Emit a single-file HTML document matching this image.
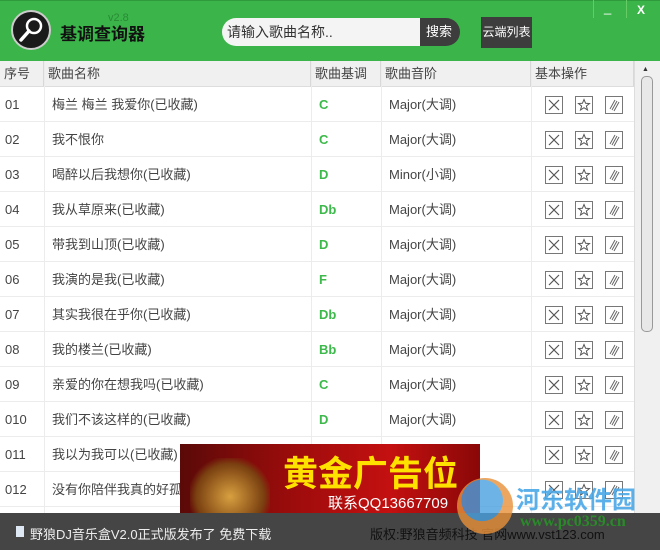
<!DOCTYPE html>
<html><head><meta charset="utf-8"><style>
*{margin:0;padding:0;box-sizing:border-box}
body{width:660px;height:550px;overflow:hidden;background:#fff;font-family:"Liberation Sans","Noto Sans CJK SC",sans-serif;position:relative;color:#333}
.hdr{position:absolute;left:0;top:0;width:660px;height:61px;background:#3bb54a;border-top:1px solid #2e9a3c}
.abs{position:absolute;white-space:nowrap}
.th{position:absolute;top:61px;height:26px;background:#f0f0f0;font-size:13px;color:#444;line-height:26px;padding-left:4px;border-right:1px solid #d8d8d8;border-bottom:1px solid #ddd}
.row{position:absolute;left:0;width:634px;height:35px;border-bottom:1px solid #ececec;font-size:13px;line-height:35px;color:#444}
.row span{position:absolute;top:0;white-space:nowrap}
.c{position:absolute;top:61px;bottom:37px;width:1px;background:#ececec}
.k{color:#3cb94a;font-weight:bold}
</style></head><body>
<div class="hdr"></div>
<svg class="abs" style="left:10px;top:9px" width="42" height="42" viewBox="0 0 42 42"><circle cx="21" cy="21" r="19" fill="#1a1a1a" stroke="#ccc" stroke-width="2"/><circle cx="24" cy="17" r="7" fill="none" stroke="#fff" stroke-width="2.5"/><line x1="19" y1="22" x2="11" y2="31" stroke="#fff" stroke-width="3.5" stroke-linecap="round"/></svg>
<div class="abs" style="left:60px;top:20px;font-size:17px;font-weight:bold;color:#111">基调查询器</div>
<div class="abs" style="left:108px;top:12px;font-size:11px;color:#2a8a35">v2.8</div>
<div class="abs" style="left:222px;top:18px;width:200px;height:28px;background:#f4f4f4;border-radius:14px 0 0 14px;font-size:14px;line-height:28px;padding-left:5px;color:#333">请输入歌曲名称..</div>
<div class="abs" style="left:420px;top:18px;width:40px;height:28px;background:#3d3d3d;border-radius:0 14px 14px 0;color:#fff;font-size:13px;line-height:28px;padding-left:6px">搜索</div>
<div class="abs" style="left:481px;top:17px;width:51px;height:31px;background:#3d3d3d;color:#fff;font-size:12px;line-height:31px;text-align:center">云端列表</div>
<div class="abs" style="left:593px;top:0;width:1px;height:18px;background:#6c6"></div>
<div class="abs" style="left:626px;top:0;width:1px;height:18px;background:#6c6"></div>
<div class="abs" style="left:604px;top:0;color:#fff;font-size:13px">_</div>
<div class="abs" style="left:637px;top:3px;color:#fff;font-size:12px;font-weight:bold">X</div>
<div class="th" style="left:0;width:44px">序号</div>
<div class="th" style="left:44px;width:267px">歌曲名称</div>
<div class="th" style="left:311px;width:70px">歌曲基调</div>
<div class="th" style="left:381px;width:150px">歌曲音阶</div>
<div class="th" style="left:531px;width:103px">基本操作</div>
<div class="c" style="left:44px"></div><div class="c" style="left:311px"></div><div class="c" style="left:381px"></div><div class="c" style="left:531px"></div>
<div class="abs" style="left:634px;top:61px;width:26px;height:452px;background:#f0f0f0;border-left:1px solid #ddd"></div>
<div class="abs" style="left:642px;top:66px;font-size:7px">▲</div>
<div class="abs" style="left:641px;top:76px;width:12px;height:256px;border:1px solid #999;border-radius:5px;background:#e8e8e8"></div>
<div class="row" style="top:87px"><span style="left:5px">01</span><span style="left:52px">梅兰 梅兰 我爱你(已收藏)</span><span class="k" style="left:319px">C</span><span style="left:389px">Major(大调)</span></div>
<div class="row" style="top:122px"><span style="left:5px">02</span><span style="left:52px">我不恨你</span><span class="k" style="left:319px">C</span><span style="left:389px">Major(大调)</span></div>
<div class="row" style="top:157px"><span style="left:5px">03</span><span style="left:52px">喝醉以后我想你(已收藏)</span><span class="k" style="left:319px">D</span><span style="left:389px">Minor(小调)</span></div>
<div class="row" style="top:192px"><span style="left:5px">04</span><span style="left:52px">我从草原来(已收藏)</span><span class="k" style="left:319px">Db</span><span style="left:389px">Major(大调)</span></div>
<div class="row" style="top:227px"><span style="left:5px">05</span><span style="left:52px">带我到山顶(已收藏)</span><span class="k" style="left:319px">D</span><span style="left:389px">Major(大调)</span></div>
<div class="row" style="top:262px"><span style="left:5px">06</span><span style="left:52px">我演的是我(已收藏)</span><span class="k" style="left:319px">F</span><span style="left:389px">Major(大调)</span></div>
<div class="row" style="top:297px"><span style="left:5px">07</span><span style="left:52px">其实我很在乎你(已收藏)</span><span class="k" style="left:319px">Db</span><span style="left:389px">Major(大调)</span></div>
<div class="row" style="top:332px"><span style="left:5px">08</span><span style="left:52px">我的楼兰(已收藏)</span><span class="k" style="left:319px">Bb</span><span style="left:389px">Major(大调)</span></div>
<div class="row" style="top:367px"><span style="left:5px">09</span><span style="left:52px">亲爱的你在想我吗(已收藏)</span><span class="k" style="left:319px">C</span><span style="left:389px">Major(大调)</span></div>
<div class="row" style="top:402px"><span style="left:5px">010</span><span style="left:52px">我们不该这样的(已收藏)</span><span class="k" style="left:319px">D</span><span style="left:389px">Major(大调)</span></div>
<div class="row" style="top:437px"><span style="left:5px">011</span><span style="left:52px">我以为我可以(已收藏)</span><span class="k" style="left:319px">C</span><span style="left:389px">Major(大调)</span></div>
<div class="row" style="top:472px"><span style="left:5px">012</span><span style="left:52px">没有你陪伴我真的好孤单</span><span class="k" style="left:319px">C</span><span style="left:389px">Major(大调)</span></div>
<script>
for(let i=0;i<12;i++){const t=87+35*i;
document.write(`<svg class="abs" style="left:545px;top:${t+9}px" width="19" height="19"><rect x=".5" y=".5" width="17" height="17" fill="#fff" stroke="#777"/><path d="M4 4L14 14M14 4L4 14" stroke="#555" stroke-width="1.2"/></svg>
<svg class="abs" style="left:575px;top:${t+9}px" width="19" height="19"><rect x=".5" y=".5" width="17" height="17" fill="#fff" stroke="#777"/><path d="M9 3.5L10.6 7.3 14.5 7.5 11.4 10 12.5 14 9 11.7 5.5 14 6.6 10 3.5 7.5 7.4 7.3Z" fill="none" stroke="#555"/></svg>
<svg class="abs" style="left:605px;top:${t+9}px" width="19" height="19"><rect x=".5" y=".5" width="17" height="17" fill="#fff" stroke="#777"/><path d="M5 13L10 4M7 14L12 5M9 15L14 6" stroke="#666"/></svg>`)}
</script>
<div class="abs" style="left:180px;top:444px;width:300px;height:69px;background:linear-gradient(90deg,#5a0a08,#a00c0c 40%,#c41010 70%,#8a0808)"></div>
<div class="abs" style="left:190px;top:458px;width:80px;height:55px;background:radial-gradient(ellipse at 50% 70%,#d8a040,#7a4010 60%,transparent 75%)"></div>
<div class="abs" style="left:283px;top:446px;font-size:35px;font-weight:bold;color:#ffe100;letter-spacing:0px">黄金广告位</div>
<div class="abs" style="left:328px;top:492px;font-size:15px;color:#fff">联系QQ13667709</div>
<div class="abs" style="left:0;top:513px;width:660px;height:37px;background:#454545"></div>
<div class="abs" style="left:16px;top:526px;width:8px;height:11px;background:#dde8f4"></div>
<div class="abs" style="left:30px;top:524px;font-size:13px;color:#eee">野狼DJ音乐盒V2.0正式版发布了 免费下载</div>
<div class="abs" style="left:370px;top:524px;font-size:13px;color:#111">版权:野狼音频科技 官网www.vst123.com</div>
<div class="abs" style="left:457px;top:478px;width:56px;height:56px;border-radius:50%;background:radial-gradient(circle at 45% 40%,#4aa0e0 45%,#e89038 46%);opacity:.8"></div>
<div class="abs" style="left:516px;top:480px;font-size:24px;font-weight:bold;color:#4aa8e8;opacity:.9">河东软件园</div>
<div class="abs" style="left:520px;top:513px;font-size:16px;font-weight:bold;color:#2a8a2a;font-family:'Liberation Serif',serif">www.pc0359.cn</div>
</body></html>
